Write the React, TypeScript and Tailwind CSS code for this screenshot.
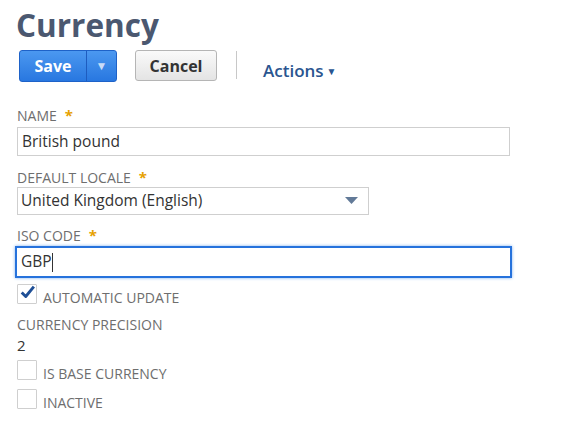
import React from "react";

const Label = ({ text, required }: { text: string; required?: boolean }) => (
  <div className="flex items-start gap-[8px] h-[16px] text-[14px] leading-[16px] text-[#6e6e6e]">
    <span>{text}</span>
    {required && <span className="text-[#e6a100] text-[15px] leading-[15px] font-bold">*</span>}
  </div>
);

const Check = ({ checked, label }: { checked?: boolean; label: string }) => (
  <div className="flex items-end gap-[6px]">
    <div className="relative w-[20px] h-[20px] border border-[#cfcfcf] bg-white rounded-[1px]">
      {checked && (
        <svg viewBox="0 0 20 20" className="absolute left-[1px] top-[-2px] w-[18px] h-[18px]">
          <path d="M3 10.5 L7.5 15 L16.5 4" fill="none" stroke="#1f4f96" strokeWidth="3.2" strokeLinejoin="round" />
        </svg>
      )}
    </div>
    <span className="text-[14px] leading-[16px] text-[#6e6e6e] -mb-[2px]">{label}</span>
  </div>
);

export default function App() {
  return (
    <div className="w-[566px] h-[439px] bg-white pl-[17px] pt-[8px]" style={{ fontFamily: '"Open Sans", sans-serif' }}>
      <h1 className="text-[31.5px] leading-[34px] font-bold text-[#4b5870] -ml-[1px]">Currency</h1>
      <div className="flex items-start mt-[8px] ml-[2px] h-[32px]">
        <div className="flex h-[32px] rounded-[3px] border border-[#1e62c8] bg-gradient-to-b from-[#4b98f0] to-[#2877e0] text-white">
          <div className="w-[66px] flex items-center justify-center text-[16px] font-bold">Save</div>
          <div className="w-[1px] bg-[#1e5cbf]" />
          <div className="w-[29px] flex items-center justify-center text-[12px] text-[#c9dcf7]">▼</div>
        </div>
        <div className="ml-[18px] h-[31px] w-[82px] rounded-[3px] border border-[#b5b5b5] bg-gradient-to-b from-[#fafafa] to-[#e4e4e4] flex items-center justify-center text-[16px] font-bold text-[#333]">
          Cancel
        </div>
        <div className="ml-[19px] mt-[1px] w-[1px] h-[28px] bg-[#c8c8c8]" />
        <div className="ml-[26px] mt-[8px] flex items-center text-[17px] font-semibold text-[#2a5590]">
          Actions
          <span className="ml-[3px] mt-[2px] text-[10px]">▼</span>
        </div>
      </div>

      <div className="mt-[26px]">
        <Label text="NAME" required />
        <div className="mt-[3px] w-[493px] h-[29px] border border-[#cfcfcf] flex items-center px-[4px] text-[15.5px] text-[#333]">
          British pound
        </div>
      </div>

      <div className="mt-[14px]">
        <Label text="DEFAULT LOCALE" required />
        <div className="mt-[1px] w-[352px] h-[28px] border border-[#cfcfcf] flex items-center justify-between px-[3px] text-[15.5px] text-[#333]">
          <span>United Kingdom (English)</span>
          <svg width="13" height="8" viewBox="0 0 13 8" className="mr-[7px]">
            <path d="M0 0 H13 L6.5 7 Z" fill="#627a98" />
          </svg>
        </div>
      </div>

      <div className="mt-[13px]">
        <Label text="ISO CODE" required />
        <div className="mt-[2px] -ml-[2px] w-[497px] h-[32px] border-2 border-[#2672dc] shadow-[0_0_3px_#7fb0ee] flex items-center px-[4px] text-[15.5px] text-[#333]">
          GBP<span className="inline-block w-[1px] h-[19px] bg-[#333]" />
        </div>
      </div>

      <div className="mt-[6px]">
        <Check checked label="AUTOMATIC UPDATE" />
      </div>

      <div className="mt-[13px]">
        <Label text="CURRENCY PRECISION" />
        <div className="mt-[4px] text-[15px] leading-[16px] text-[#333]">2</div>
      </div>

      <div className="mt-[7px] flex flex-col gap-[9px]">
        <Check label="IS BASE CURRENCY" />
        <Check label="INACTIVE" />
      </div>
    </div>
  );
}
